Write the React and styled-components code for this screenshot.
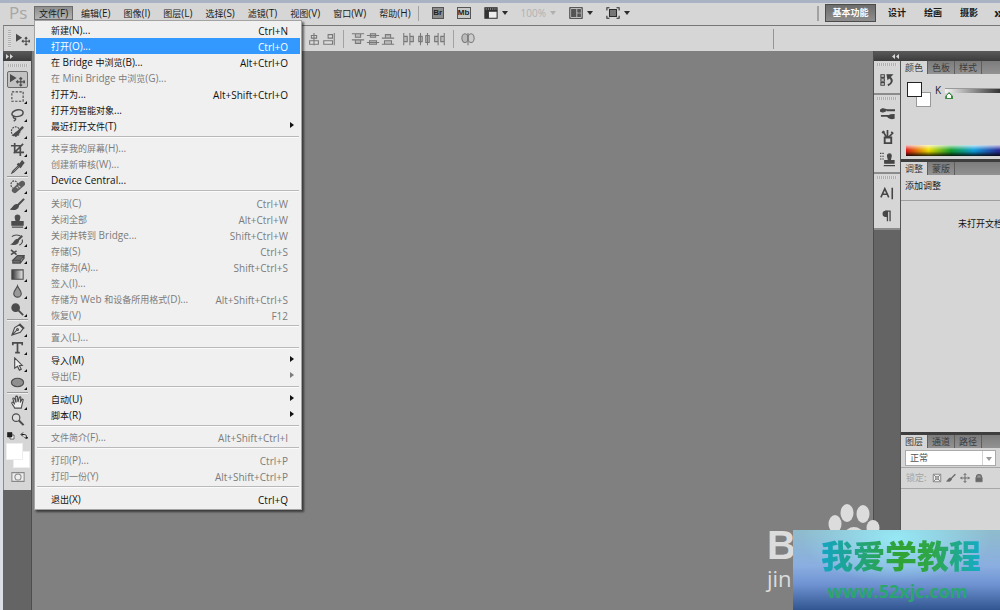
import React from "react";
import styled, { createGlobalStyle, css } from "styled-components";

const LATIN = '"Open Sans", "Noto Sans", "Noto Sans CJK SC", sans-serif';
const HAN = '"Noto Sans CJK SC", "Open Sans", sans-serif';

const Global = createGlobalStyle`
  *, *::before, *::after { box-sizing: border-box; }
  html, body { margin: 0; height: 100%; overflow: hidden; }
  body { font: 10px/16px ${LATIN}; color: #1a1a1a; background: #808080; }
  button, select { font: inherit; color: inherit; margin: 0; padding: 0; border: 0; background: none; }
  svg { display: block; flex: none; }
`;

/* ---------- text ---------- */

const Han = styled.span`
  font-family: ${HAN};
  font-size: 9px;
`;

const Text = ({ children }) =>
  children
    .split(/([\u4e00-\u9fff]+)/)
    .filter(Boolean)
    .map((part, i) => (/[\u4e00-\u9fff]/.test(part) ? <Han key={i}>{part}</Han> : part));

/* ---------- frame ---------- */

const Window = styled.div`
  position: relative;
  display: flex;
  flex-direction: column;
  height: 100vh;
  overflow: hidden;
  border-top: 3px solid #a9b3c4;
  background: #d6d6d6;
`;

const MenuBar = styled.nav`
  display: flex;
  align-items: center;
  flex: none;
  height: 22px;
  padding: 0 0 2px 9px;
  white-space: nowrap;
`;

const Logo = styled.span`
  width: 25px;
  font-size: 17px;
  line-height: 20px;
  color: #a6a6a6;
`;

const Menus = styled.div`
  display: flex;
  gap: 3px;
`;

const MenuSlot = styled.div`
  position: relative;
`;

const MenuButton = styled.button`
  display: block;
  height: 14px;
  padding: 0 5px;
  line-height: 12px;
  border: 1px solid transparent;
  border-width: 1px 0;
  ${(p) =>
    p.$open &&
    css`
      border-color: #6c6c6c;
      background: linear-gradient(#8e8e8e, #b4b4b4);
      box-shadow: inset 1px 0 #6c6c6c, inset -1px 0 #6c6c6c;
    `}
`;

const Rule = styled.span`
  flex: none;
  width: ${(p) => p.$thick || 1}px;
  height: ${(p) => p.$h || 15}px;
  background: #a2a2a2;
`;

const AppTools = styled.div`
  display: flex;
  align-items: center;
  gap: 13px;
  padding-left: 2px;
`;

const AppButton = styled.button`
  display: flex;
  align-items: center;
  gap: 4px;
  height: 16px;
  color: ${(p) => (p.$off ? "#b0b0b0" : "#2c2c2c")};
`;

const Caret = styled.span`
  border: 3px solid transparent;
  border-top: 4px solid currentColor;
  border-bottom: 0;
`;

const Workspaces = styled.div`
  display: flex;
  align-items: center;
  flex: none;
  margin-left: auto;
`;

const Workspace = styled.button`
  height: 18px;
  margin-left: 6px;
  padding: 0 5px;
  font: bold 9px/16px ${HAN};
  border: 1px solid transparent;
  ${(p) =>
    p.$active &&
    css`
      width: 51px;
      padding: 0;
      color: #fff;
      border-color: #4c4c4c;
      background: linear-gradient(#6c6c6c, #8e8e8e);
    `}
`;

const More = styled.button`
  width: 16px;
  padding-left: 10px;
  overflow: hidden;
  font-size: 14px;
  font-weight: bold;
`;

const OptionsBar = styled.div`
  display: flex;
  align-items: center;
  flex: none;
  height: 26px;
  margin-left: 3px;
  padding-left: 4px;
  border-top: 1px solid #777;
  border-left: 1px solid #8a8a8a;
`;

const Lead = styled.div`
  display: flex;
  align-items: center;
  gap: 5px;
  flex: none;
  width: 299px;
  color: #4a4a4a;
`;

const Grip = styled.span`
  flex: none;
  ${(p) =>
    p.$vertical
      ? css`
          width: 3px;
          height: 18px;
          background: repeating-linear-gradient(#b0b0b0 0 1px, #dedede 1px 2px);
        `
      : css`
          width: 20px;
          height: 3px;
          margin: 2px auto;
          background: repeating-linear-gradient(90deg, #b0b0b0 0 1px, #dedede 1px 2px);
        `}
`;

const AlignGroup = styled.div`
  display: flex;
  gap: 1px;
  padding: 0 7px 0 0;
  color: #787878;
`;

const OptionEnd = styled.div`
  width: 227px;
  height: 20px;
  margin-left: auto;
  border-left: 1px solid #959595;
`;

const Body = styled.div`
  display: flex;
  flex: 1;
  min-height: 0;
  background: #808080;
`;

/* ---------- toolbox ---------- */

const ToolDock = styled.aside`
  flex: none;
  width: 32px;
  border-left: 3px solid #dce0e6;
  border-right: 1px solid #4e4e4e;
  background: #646464;
`;

const DockHead = styled.div`
  display: flex;
  align-items: center;
  height: 10px;
  padding-left: ${(p) => p.$pad}px;
  color: #d8d8d8;
  background: linear-gradient(#5a5a5a, #3c3c3c);
`;

const ToolPanel = styled.div`
  display: flex;
  flex-direction: column;
  padding: 1px 1px 4px;
  border-left: 1px solid #8c8c8c;
  background: #d6d6d6;
`;

const ToolGap = styled.span`
  height: 2px;
`;

const ToolGroup = styled.div`
  display: flex;
  flex-direction: column;
  align-items: center;
  justify-content: space-between;
  height: ${(p) => p.$h}px;
`;

const ToolRule = styled.span`
  height: 3px;
  margin: 0 2px;
  border-bottom: 1px solid #efefef;
  background: linear-gradient(transparent 1px, #9a9a9a 1px);
`;

const ToolButton = styled.button`
  position: relative;
  display: grid;
  place-items: center;
  width: 21px;
  height: 17px;
  color: #4c4c4c;
  border-radius: 2px;
  border: 1px solid ${(p) => (p.$active ? "#6a6a6a" : "transparent")};
  background: ${(p) => (p.$active ? "#c2c2c2" : "none")};
  ${(p) =>
    p.$more &&
    css`
      &::after {
        content: "";
        position: absolute;
        right: 0;
        bottom: 0;
        border-left: 3px solid transparent;
        border-bottom: 3px solid #111;
      }
    `}
`;

const MiniRow = styled.div`
  display: flex;
  justify-content: space-between;
  align-items: center;
  height: 15px;
  padding: 0 2px;
`;

const Swatches = styled.div`
  position: relative;
  flex: none;
  width: 24px;
  height: 25px;
  margin: ${(p) => p.$margin || 0};
`;

const Swatch = styled.span`
  position: absolute;
  width: ${(p) => p.$size}px;
  height: ${(p) => p.$size}px;
  background: #fff;
  border: 1px solid ${(p) => p.$line};
  ${(p) => (p.$front ? "left: 0; top: 0;" : "right: 0; bottom: 0;")}
`;

const MaskRow = styled.div`
  display: grid;
  place-items: center;
  height: 18px;
`;

const Canvas = styled.main`
  flex: 1;
`;

/* ---------- file menu ---------- */

const Menu = styled.div`
  position: absolute;
  z-index: 5;
  top: 100%;
  left: 0;
  width: 268px;
  padding: 1px 1px 2px;
  border: 1px solid #a3a3a3;
  background: #f0f0f0;
  box-shadow: 2px 2px 2px rgba(0, 0, 0, 0.55);
`;

const Item = styled.button`
  display: grid;
  grid-template-columns: 1fr auto 8px;
  align-items: center;
  width: 100%;
  height: 16px;
  padding: 0 4px 0 15px;
  text-align: left;
  line-height: 16px;
  color: ${(p) => (p.$off ? "#7c7c7c" : "#111")};
  ${(p) =>
    p.$hot &&
    css`
      color: #fff;
      background: #3399ff;
    `}
`;

const Submenu = styled.span`
  grid-column: 3;
  justify-self: center;
  margin-bottom: 4px;
  border: 3px solid transparent;
  border-left: 4px solid currentColor;
  border-right: 0;
`;

const Divider = styled.div`
  height: ${(p) => (p.$tight ? 6 : 7)}px;
  padding: 2px 1px 0;
  &::before {
    content: "";
    display: block;
    height: 2px;
    background: #b9b9b9;
    border-bottom: 1px solid #fbfbfb;
  }
`;

/* ---------- right dock ---------- */

const Dock = styled.aside`
  display: flex;
  flex-direction: column;
  flex: none;
  width: 127px;
  border-left: 1px solid #4e4e4e;
  background: #646464;
`;

const DockColumns = styled.div`
  display: flex;
  flex: 1;
  min-height: 0;
`;

const Strip = styled.div`
  flex: none;
  width: 27px;
  border-right: 1px solid #555;
`;

const StripGroup = styled.div`
  display: flex;
  flex-direction: column;
  padding-bottom: 1px;
  border-bottom: 2px solid #8b8b8b;
  background: #d6d6d6;
`;

const StripButton = styled.button`
  display: grid;
  place-items: center;
  height: ${(p) => p.$h || 23}px;
  color: #464646;
`;

const Panels = styled.div`
  display: flex;
  flex-direction: column;
  flex: 1;
  min-width: 0;
  overflow: hidden;
`;

const Panel = styled.section`
  display: flex;
  flex-direction: column;
  flex: ${(p) => (p.$h ? "none" : 1)};
  ${(p) => p.$h && `height: ${p.$h}px;`}
  border-bottom: ${(p) => (p.$last ? 0 : 3)}px solid #3e3e3e;
  background: #d6d6d6;
`;

const Tabs = styled.div`
  display: flex;
  flex: none;
  height: 13px;
  background: linear-gradient(#7c7c7c, #929292);
`;

const Tab = styled.button`
  width: 27px;
  height: 13px;
  color: #3c3c3c;
  font: 9px/13px ${HAN};
  border-right: 1px solid #5e5e5e;
  background: ${(p) => (p.$on ? "#d6d6d6" : "none")};
`;

const ColorRow = styled.div`
  display: flex;
  gap: 4px;
  padding: 8px 0 0 6px;
`;

const Channel = styled.label`
  display: flex;
  flex: 1;
  min-width: 0;
  gap: 4px;
  height: 16px;
`;

const Ramp = styled.input`
  appearance: none;
  flex: 1;
  min-width: 0;
  height: 5px;
  margin: 6px 0 0;
  border-top: 1px solid #999;
  background: linear-gradient(90deg, #f4f4f4, #333);
  &::-webkit-slider-thumb {
    appearance: none;
    width: 8px;
    height: 7px;
    margin-top: 9px;
    background: radial-gradient(circle at 50% 60%, #fff 2px, #3f8a45 2px);
    clip-path: polygon(50% 0, 100% 60%, 100% 100%, 0 100%, 0 60%);
  }
`;

const Spectrum = styled.div`
  height: 11px;
  margin: auto 0 3px 5px;
  background:
    linear-gradient(rgba(255, 255, 255, 0.75), transparent 45%, rgba(0, 0, 0, 0.1) 60%, rgba(0, 0, 0, 0.85)),
    linear-gradient(90deg, #e01818, #f0e000 24%, #12a030 48%, #10a0e0 72%, #2a2f9c 98%);
`;

const PanelTitle = styled.div`
  padding: 2px 4px 5px;
  border-bottom: 1px solid #a0a0a0;
  font: 9px/18px ${HAN};
`;

const Notice = styled.p`
  margin: 14px 0 0 57px;
  font: 9px/18px ${HAN};
  color: #111;
  white-space: nowrap;
`;

const BlendRow = styled.div`
  display: flex;
  padding: 2px 4px 1px;
  border-bottom: 1px solid #a6a6a6;
`;

const SelectBox = styled.div`
  position: relative;
  flex: 1;
  color: #999;
  border: 1px solid #aaa;
  background: #fff;
  &::after {
    content: "";
    position: absolute;
    top: 0;
    bottom: 0;
    right: 12px;
    border-left: 1px solid #d2d2d2;
  }
`;

const SelectCaret = styled(Caret)`
  position: absolute;
  right: 3px;
  top: 6px;
`;

const Blend = styled.select`
  display: block;
  appearance: none;
  width: 100%;
  height: 14px;
  padding-left: 4px;
  color: #555;
  font: 9px/14px ${HAN};
`;

const LockRow = styled.div`
  display: flex;
  align-items: center;
  gap: 4px;
  height: 21px;
  padding-left: 5px;
  color: #6a6a6a;
  border-bottom: 1px solid #a6a6a6;
`;

const LockLabel = styled.span`
  width: 22px;
  color: #a4a4a4;
  font: 9px/16px ${HAN};
  white-space: nowrap;
`;

const IconButton = styled.button`
  color: inherit;
`;

/* ---------- watermarks ---------- */

const BaiduMark = styled.div`
  position: absolute;
  right: 120px;
  bottom: 20px;
  width: 113px;
  color: #dcdcdc;
`;

const BaiduName = styled.div`
  font: bold 40px/42px "Liberation Sans", sans-serif;
`;

const BaiduSite = styled.div`
  font: 22px/24px ${LATIN};
`;

const Paw = styled.svg`
  position: absolute;
  right: 0;
  top: -20px;
`;

const SiteMark = styled.div`
  position: absolute;
  right: 0;
  bottom: 0;
  width: 207px;
  height: 80px;
  padding: 1px 20px 0 28px;
  text-align: center;
  white-space: nowrap;
  background:
    radial-gradient(ellipse 95px 45px at 50% 10%, #96e8f5, rgba(150, 232, 245, 0)),
    linear-gradient(#8fbccc, #8aaee0 45%, #6f93d2 68%, #31558f);
`;

const SiteName = styled.div`
  font: 900 32px/46px ${HAN};
  color: transparent;
  background: linear-gradient(90deg, #14a5c4, #30a333 50%, #2ea74a 70%, #14acc8);
  background-clip: text;
`;

const SiteUrl = styled.div`
  margin-left: -6px;
  font: bold 18px/28px ${LATIN};
  color: #2aa56f;
`;

/* ---------- icons ---------- */

const Svg = ({ w = 16, h = w, box = "0 0 16 16", children }) => (
  <svg width={w} height={h} viewBox={box} fill="none" stroke="currentColor" strokeWidth="1.2" aria-hidden="true">
    {children}
  </svg>
);

const shapes = {
  move: (
    <>
      <path d="M0 2v9l7-4.500z" fill="currentColor" stroke="none" />
      <path d="M11.500 6v9M7 10.500h9M10 7.500l1.500-1.500 1.500 1.500M10 13.500l1.500 1.500 1.500-1.500M8.500 9l-1.500 1.500 1.500 1.500M14.500 9l1.500 1.500-1.500 1.500" />
    </>
  ),
  marquee: <path d="M2 3h12v10H2z" strokeDasharray="2.500 1.500" />,
  lasso: (
    <path d="M5 10c-4-1-4-4 0-6s9-1 9 2-5 5-9 4c-2-.5-2 2 0 2s1 2-1 3" strokeWidth="1.500" />
  ),
  quick: (
    <>
      <ellipse cx="6" cy="8" rx="4.500" ry="5" strokeDasharray="2 1" />
      <path d="M14 3L8 9" strokeWidth="2.500" />
      <path d="M9 8c1 4-3 5-6 4 2-1 3-4 6-4z" fill="currentColor" />
    </>
  ),
  crop: <path d="M5 1v10h10M1 4h10v11M4 12l10-10" strokeWidth="1.800" />,
  dropper: (
    <>
      <path d="M10 6l-7 7-1 2 2-1 7-7" fill="#eee" />
      <path d="M8 5l4 4M10 7l3-4 1 1-3 4z" strokeWidth="2.500" />
    </>
  ),
  heal: (
    <>
      <ellipse cx="4.500" cy="6" rx="3.500" ry="4" strokeDasharray="2 1" />
      <path d="M5 12l8-7" strokeWidth="6" strokeLinecap="round" stroke="#5c5c5c" />
      <path d="M7 8.500l2 1.500M9 7l2 2" stroke="#ccc" />
    </>
  ),
  brush: (
    <>
      <path d="M15 2L8 9" strokeWidth="2.200" />
      <path d="M9 9c0 4-4 5-8 4 3-1 2-5 6-5z" fill="currentColor" />
    </>
  ),
  stamp: (
    <path d="M8 1a2.500 2.500 0 012.500 2.500C10.500 5 9.500 6 9.500 8H14v4H2V8h4.500c0-2-1-3-1-4.500A2.500 2.500 0 018 1zM2 14h12" fill="currentColor" />
  ),
  history: (
    <>
      <path d="M13 4L8 9" strokeWidth="2.400" />
      <path d="M9 9c0 3-3 5-7 4 3-1 2-4 5-5z" fill="currentColor" />
      <path d="M2 5c3-3 6-2 9-1M13 8c1 3-1 5-3 6" />
    </>
  ),
  eraser: (
    <>
      <path d="M3 12l5-5h7l-4 5zM3 12v3h8v-3M11 15l4-5V7" fill="#6c6c6c" />
      <path d="M1 1l6 5M1 6l6-4" strokeWidth="1.600" />
    </>
  ),
  gradient: (
    <>
      <defs>
        <linearGradient id="ramp">
          <stop offset="0" stopColor="#333" />
          <stop offset="1" stopColor="#eee" />
        </linearGradient>
      </defs>
      <path d="M2 3h12v10H2z" fill="url(#ramp)" />
    </>
  ),
  drop: <path d="M8 2c1 3 4 5 4 8a4 4 0 01-8 0c0-3 3-5 4-8z" fill="#999" />,
  dodge: (
    <>
      <circle cx="6" cy="6" r="4" fill="currentColor" />
      <path d="M9 9l5 5" strokeWidth="2" />
    </>
  ),
  pen: (
    <>
      <path d="M2 14L5 6l5-3 4 4-3 4zM2 14l5-5" fill="#ddd" />
      <path d="M10 2l5 5" strokeWidth="2" />
      <circle cx="8" cy="8" r="1" />
    </>
  ),
  type: <path d="M3 5.500V3h10v2.500M8 3v10M5.500 13.500h5" strokeWidth="1.800" />,
  select: <path d="M5 1v11l3-2 2 4 2-1-2-4h3z" fill="#eee" />,
  ellipse: <ellipse cx="8" cy="8" rx="6.500" ry="4.500" fill="#8f8f8f" />,
  hand: (
    <path d="M5 14c-1-3-4-5-3-6s2 0 3 2L3 4c0-1 1.500-1 2 0l1.500 4L6 2c0-1 2-1 2 0l.5 5.500L10 2.500c.5-1 2-.5 1.500.5L11 8l1.500-3c.5-1 2-.5 1.500.5L12 14z" fill="#eee" />
  ),
  zoom: (
    <>
      <circle cx="6.500" cy="6" r="4" fill="#ddd" />
      <path d="M9.500 9l5 5" strokeWidth="2.200" />
    </>
  ),
  mask: (
    <>
      <path d="M1 3h14v10H1z" fill="#eee" stroke="#888" />
      <circle cx="8" cy="8" r="3.500" stroke="#888" />
    </>
  ),
  defaults: (
    <>
      <path d="M6 6h8v8H6z" fill="#fff" />
      <path d="M1 1h9v9H1z" fill="#222" />
    </>
  ),
  swap: <path d="M3 5h6c3 0 4 2 4 7M6 1L2 5l4 4M9 10l4 4 3-4" strokeWidth="2" />,
  historyPanel: (
    <>
      <path d="M1 2h4v3H1zM1 6.500h4v3H1zM1 11h4v3H1z" />
      <path d="M9 14c5-2 6-6 2-9" strokeWidth="2.200" />
      <path d="M8 2l6 0-5 5z" fill="currentColor" />
    </>
  ),
  brushes: (
    <>
      <path d="M0 5c2-3 4-2 7-1-2 3-5 3-7 1z" fill="currentColor" />
      <path d="M7 4.500h9M1 10.500h8" strokeWidth="2" />
      <path d="M15 9v4c-3 1-6 0-7-2 2-2 4-2 7-2z" fill="currentColor" />
    </>
  ),
  presets: (
    <>
      <path d="M5 9h7v6H5z" strokeWidth="2" />
      <path d="M7 9L3 2M8 9V1M9 9l5-5M2 4l3-1M12 3l2 2" strokeWidth="1.800" />
    </>
  ),
  cloneSource: (
    <>
      <path d="M0 1.500h5M0 4.500h5M0 7.500h5" strokeDasharray="1.500 1" />
      <path d="M10 2a2 2 0 012 2l-1 5h4v3H5V9h4L8 4a2 2 0 012-2zM4 14.500h12" fill="currentColor" />
    </>
  ),
  character: <path d="M1 13L5.500 3 10 13M3 9.500h5.500M14 2v13" strokeWidth="1.800" />,
  paragraph: (
    <>
      <path d="M8 2.500H6.500a3 3 0 000 6H8z" fill="currentColor" />
      <path d="M8.500 2v12M11.500 2v12M6 2.500h6" strokeWidth="1.500" />
    </>
  ),
  lockPixels: <path d="M2 2h12v12H2zM3 3l4 4M13 3L9 7M3 13l4-4M13 13L9 9M6 6h4v4H6z" fill="#eee" />,
  lockMove: <path d="M8 1v14M1 8h14M6 3l2-2 2 2M6 13l2 2 2-2M3 6L1 8l2 2M13 6l2 2-2 2" strokeWidth="1.600" />,
  lockAll: (
    <>
      <path d="M3 7h10v7H3z" fill="currentColor" />
      <path d="M4 7c0-6 8-6 8 0" strokeWidth="2" fill="#999" />
    </>
  ),
  vcenter: <path d="M8 1v14M5 4h6v3H5zM3 10h10v4H3z" fill="#ddd" />,
  right: <path d="M14 1v14M7 3h5v4H7zM2 10h10v4H2z" fill="#ddd" />,
  distTop: <path d="M1 2h14M1 9h14M5 2h6v4H5zM5 9h6v4H5z" fill="#bbb" />,
  distMid: <path d="M1 4h14M1 12h14M5 2h6v4H5zM4 10h8v4H4z" fill="#bbb" />,
  distBottom: <path d="M1 7h14M1 14h14M5 3h6v4H5zM4 10h8v4H4z" fill="#bbb" />,
  distLeft: <path d="M2 1v14M9 1v14M2 5h4v6H2zM9 5h4v6H9z" fill="#bbb" />,
  distCenter: <path d="M4 1v14M12 1v14M2 5h4v6H2zM10 4h4v8h-4z" fill="#bbb" />,
  distRight: <path d="M7 1v14M14 1v14M3 5h4v6H3zM10 5h4v6h-4z" fill="#bbb" />,
  autoAlign: (
    <>
      <ellipse cx="4.500" cy="7" rx="3.500" ry="5" fill="#bbb" />
      <ellipse cx="11.500" cy="7" rx="3.500" ry="5" fill="#ccc" />
      <path d="M8 1v14" />
    </>
  ),
  extras: (
    <>
      <path d="M1 2h14v3H1zM1 5h3v9H1z" fill="#333" stroke="#333" />
      <path d="M5 6h10v8H5z" fill="#eee" />
      <path d="M2 3.500h13" stroke="#ddd" strokeDasharray="1 1.500" />
    </>
  ),
  arrange: (
    <>
      <path d="M1 2h14v12H1z" fill="#eee" />
      <path d="M3 4h5v8H3zM10 4h3v3h-3zM10 9h3v3h-3z" fill="#555" stroke="#555" />
    </>
  ),
  screen: (
    <>
      <path d="M4 4h8v8H4z" fill="#777" />
      <path d="M1 5V2h3M12 2h3v3M1 11v3h3M12 14h3v-3" />
    </>
  ),
};

const Icon = ({ name, size = 14 }) => <Svg w={size}>{shapes[name]}</Svg>;

const Chevrons = ({ left }) => (
  <svg width="7" height="5" viewBox="0 0 7 5" fill="currentColor" aria-hidden="true">
    <path d={left ? "M3 0v5L0 2.500zM7 0v5L4 2.500z" : "M0 0v5l3-2.500zM4 0v5l3-2.500z"} />
  </svg>
);

const Badge = styled.span`
  display: grid;
  place-items: center;
  width: ${(p) => p.$w}px;
  height: 12px;
  font: bold 8px/10px "Liberation Sans", sans-serif;
  color: #222;
  border: 1px solid #555;
  background: ${(p) => p.$bg};
`;

/* ---------- data ---------- */

const barMenus = ["文件(F)", "编辑(E)", "图像(I)", "图层(L)", "选择(S)", "滤镜(T)", "视图(V)", "窗口(W)", "帮助(H)"];

const off = true;
const fileMenu = [
  { label: "新建(N)...", keys: "Ctrl+N" },
  { label: "打开(O)...", keys: "Ctrl+O", hot: true },
  { label: "在 Bridge 中浏览(B)...", keys: "Alt+Ctrl+O" },
  { label: "在 Mini Bridge 中浏览(G)...", off },
  { label: "打开为...", keys: "Alt+Shift+Ctrl+O" },
  { label: "打开为智能对象..." },
  { label: "最近打开文件(T)", sub: true },
  { rule: "tight" },
  { label: "共享我的屏幕(H)...", off },
  { label: "创建新审核(W)...", off },
  { label: "Device Central..." },
  { rule: "wide" },
  { label: "关闭(C)", keys: "Ctrl+W", off },
  { label: "关闭全部", keys: "Alt+Ctrl+W", off },
  { label: "关闭并转到 Bridge...", keys: "Shift+Ctrl+W", off },
  { label: "存储(S)", keys: "Ctrl+S", off },
  { label: "存储为(A)...", keys: "Shift+Ctrl+S", off },
  { label: "签入(I)...", off },
  { label: "存储为 Web 和设备所用格式(D)...", keys: "Alt+Shift+Ctrl+S", off },
  { label: "恢复(V)", keys: "F12", off },
  { rule: "tight" },
  { label: "置入(L)...", off },
  { rule: "wide" },
  { label: "导入(M)", sub: true },
  { label: "导出(E)", sub: true, off },
  { rule: "wide" },
  { label: "自动(U)", sub: true },
  { label: "脚本(R)", sub: true },
  { rule: "tight" },
  { label: "文件简介(F)...", keys: "Alt+Shift+Ctrl+I", off },
  { rule: "wide" },
  { label: "打印(P)...", keys: "Ctrl+P", off },
  { label: "打印一份(Y)", keys: "Alt+Shift+Ctrl+P", off },
  { rule: "wide" },
  { label: "退出(X)", keys: "Ctrl+Q" },
];

const toolGroups = [
  { h: 104, tools: ["move", "marquee", "lasso", "quick", "crop", "dropper"] },
  { h: 140, tools: ["heal", "brush", "stamp", "history", "eraser", "gradient", "drop", "dodge"] },
  { h: 70, tools: ["pen", "type", "select", "ellipse"] },
  { h: 34, tools: ["hand", "zoom"] },
];

const FileMenu = () => (
  <Menu role="menu">
    {fileMenu.map((m, i) =>
      m.rule ? (
        <Divider key={i} $tight={m.rule === "tight"} />
      ) : (
        <Item key={i} role="menuitem" $off={m.off} $hot={m.hot}>
          <span>
            <Text>{m.label}</Text>
          </span>
          {m.keys && <span>{m.keys}</span>}
          {m.sub && <Submenu />}
        </Item>
      )
    )}
  </Menu>
);

const Toolbox = () => (
  <ToolDock>
    <DockHead $pad={3}>
      <Chevrons />
    </DockHead>
    <ToolPanel>
      <Grip />
      <ToolGap />
      {toolGroups.map((g, i) => (
        <React.Fragment key={g.h}>
          {i > 0 && <ToolRule />}
          <ToolGroup $h={g.h}>
            {g.tools.map((t) => (
              <ToolButton key={t} aria-label={t} $active={t === "move"} $more={t !== "move" && t !== "zoom"}>
                <Icon name={t} size={15} />
              </ToolButton>
            ))}
          </ToolGroup>
        </React.Fragment>
      ))}
      <MiniRow>
        <Icon name="defaults" size={8} />
        <Icon name="swap" size={8} />
      </MiniRow>
      <Swatches $margin="0 0 0 1px">
        <Swatch $size={17} $line="#eee" />
        <Swatch $size={17} $line="#eee" $front />
      </Swatches>
      <MaskRow>
        <Icon name="mask" />
      </MaskRow>
    </ToolPanel>
  </ToolDock>
);

const TabBar = ({ names }) => (
  <Tabs role="tablist">
    {names.map((n, i) => (
      <Tab key={n} role="tab" $on={i === 0}>
        {n}
      </Tab>
    ))}
  </Tabs>
);

const RightDock = () => (
  <Dock>
    <DockHead $pad={18}>
      <Chevrons left />
    </DockHead>
    <DockColumns>
      <Strip>
        <StripGroup>
          <Grip />
          <StripButton $h={24} aria-label="history">
            <Icon name="historyPanel" />
          </StripButton>
        </StripGroup>
        <StripGroup>
          <Grip />
          {["brushes", "presets", "cloneSource"].map((n) => (
            <StripButton key={n} aria-label={n}>
              <Icon name={n} size={15} />
            </StripButton>
          ))}
        </StripGroup>
        <StripGroup>
          <Grip />
          {["character", "paragraph"].map((n) => (
            <StripButton key={n} aria-label={n}>
              <Icon name={n} />
            </StripButton>
          ))}
        </StripGroup>
      </Strip>
      <Panels>
        <Panel $h={101}>
          <TabBar names={["颜色", "色板", "样式"]} />
          <ColorRow>
            <Swatches>
              <Swatch $size={15} $line="#999" />
              <Swatch $size={15} $line="#222" $front />
            </Swatches>
            <Channel>
              K
              <Ramp type="range" defaultValue="0" />
            </Channel>
          </ColorRow>
          <Spectrum />
        </Panel>
        <Panel $h={273}>
          <TabBar names={["调整", "蒙版"]} />
          <PanelTitle>添加调整</PanelTitle>
          <Notice>未打开文档</Notice>
        </Panel>
        <Panel $last>
          <TabBar names={["图层", "通道", "路径"]} />
          <BlendRow>
            <SelectBox>
              <Blend aria-label="混合模式">
                <option>正常</option>
              </Blend>
              <SelectCaret />
            </SelectBox>
          </BlendRow>
          <LockRow>
            <LockLabel>锁定:</LockLabel>
            {["lockPixels", "brush", "lockMove", "lockAll"].map((n) => (
              <IconButton key={n} aria-label={n}>
                <Icon name={n} size={10} />
              </IconButton>
            ))}
          </LockRow>
        </Panel>
      </Panels>
    </DockColumns>
  </Dock>
);

const AlignSet = ({ names }) => (
  <AlignGroup>
    {names.map((n) => (
      <IconButton key={n} aria-label={n}>
        <Icon name={n} />
      </IconButton>
    ))}
  </AlignGroup>
);

const BarGap = styled.span`
  width: 7px;
`;

export default function App() {
  return (
    <Window>
      <Global />
      <MenuBar>
        <Logo>Ps</Logo>
        <Menus>
          {barMenus.map((m, i) => (
            <MenuSlot key={m}>
              <MenuButton $open={i === 0}>
                <Text>{m}</Text>
              </MenuButton>
              {i === 0 && <FileMenu />}
            </MenuSlot>
          ))}
        </Menus>
        <AppTools>
          <Rule />
          <Badge $w={12} $bg="#8c8c8c">Br</Badge>
          <Badge $w={14} $bg="#c8c8c8">Mb</Badge>
          <AppButton aria-label="extras">
            <Icon name="extras" />
            <Caret />
          </AppButton>
          <AppButton $off>
            100%
            <Caret />
          </AppButton>
          <AppButton aria-label="arrange">
            <Icon name="arrange" />
            <Caret />
          </AppButton>
          <AppButton aria-label="screen mode">
            <Icon name="screen" />
            <Caret />
          </AppButton>
        </AppTools>
        <Workspaces>
          <Rule $thick={2} />
          <Workspace $active>基本功能</Workspace>
          <Workspace>设计</Workspace>
          <Workspace>绘画</Workspace>
          <Workspace>摄影</Workspace>
          <More>»</More>
        </Workspaces>
      </MenuBar>
      <OptionsBar>
        <Lead>
          <Grip $vertical />
          <Icon name="move" />
        </Lead>
        <AlignSet names={["vcenter", "right"]} />
        <Rule $h={18} />
        <BarGap />
        <AlignSet names={["distTop", "distMid", "distBottom"]} />
        <AlignSet names={["distLeft", "distCenter", "distRight"]} />
        <Rule $h={18} />
        <BarGap />
        <AlignSet names={["autoAlign"]} />
        <OptionEnd />
      </OptionsBar>
      <Body>
        <Toolbox />
        <Canvas />
        <RightDock />
      </Body>
      <BaiduMark>
        <Paw width="52" height="34" viewBox="0 0 52 34" fill="#dcdcdc">
          <ellipse cx="7" cy="20" rx="6.500" ry="9" />
          <ellipse cx="19" cy="9" rx="6.500" ry="9" />
          <ellipse cx="35" cy="10" rx="6.500" ry="9" />
          <ellipse cx="45" cy="24" rx="6.500" ry="8" />
          <ellipse cx="26" cy="31" rx="9" ry="8" />
        </Paw>
        <BaiduName>B</BaiduName>
        <BaiduSite>jin</BaiduSite>
      </BaiduMark>
      <SiteMark>
        <SiteName>我爱学教程</SiteName>
        <SiteUrl>www.52xjc.com</SiteUrl>
      </SiteMark>
    </Window>
  );
}
